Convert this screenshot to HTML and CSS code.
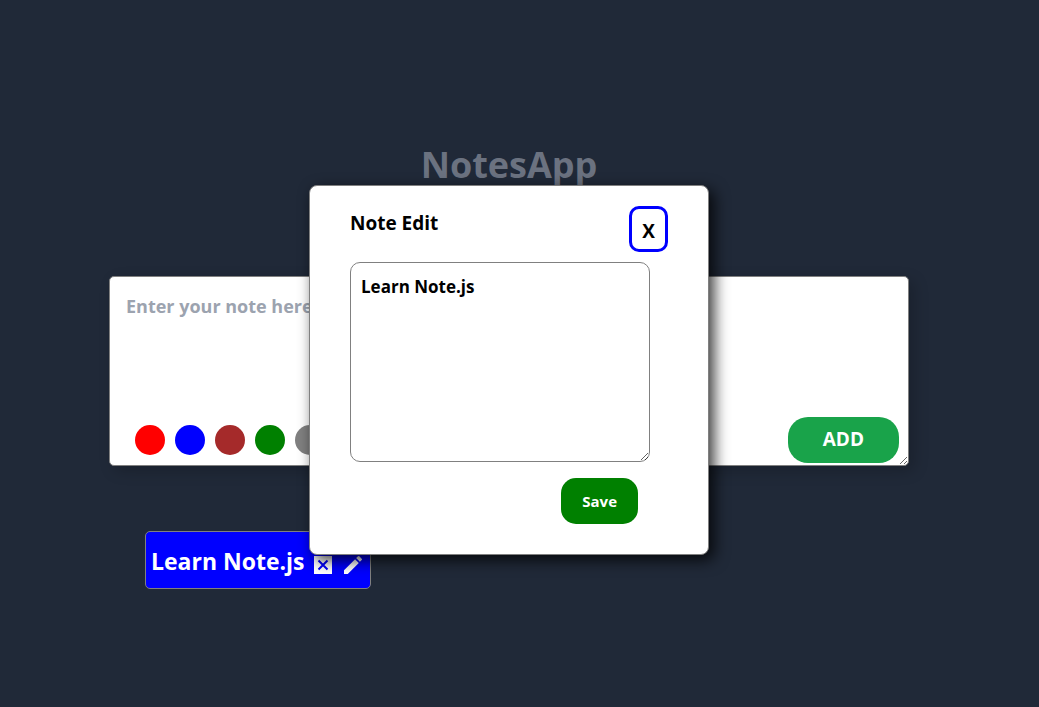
FILE: index.html
```html
<!DOCTYPE html>
<html lang="en">
<head>
  <meta charset="utf-8">
  <meta name="viewport" content="width=device-width, initial-scale=1">
  <title>NotesApp</title>
  <link rel="stylesheet" href="styles.css">
</head>
<body>
  <main class="page">
    <h1 class="title">NotesApp</h1>
    <form class="composer">
      <textarea class="composer-input" aria-label="New note" placeholder="Enter your note here..."></textarea>
      <div class="composer-bar">
        <div class="swatches">
          <button type="button" class="swatch red" aria-label="Red"></button>
          <button type="button" class="swatch blue" aria-label="Blue"></button>
          <button type="button" class="swatch brown" aria-label="Brown"></button>
          <button type="button" class="swatch green" aria-label="Green"></button>
          <button type="button" class="swatch gray" aria-label="Gray"></button>
        </div>
        <button type="button" class="add">ADD</button>
      </div>
    </form>
    <section class="notes">
      <article class="note">
        <span class="note-text">Learn Note.js</span>
        <button type="button" class="icon-button" aria-label="Delete note">
          <svg width="24" height="24" viewBox="0 0 24 24"><path fill="#fff" d="M3 3h18v18H3z"/><path d="M7.500 7.500l9 9M16.500 7.500l-9 9" stroke="#00f" stroke-width="2"/></svg>
        </button>
        <button type="button" class="icon-button" aria-label="Edit note">
          <svg width="24" height="24" viewBox="0 0 24 24"><path fill="#fff" d="M3 17.250V21h3.750L17.810 9.940l-3.750-3.750L3 17.250zM20.710 7.040a1 1 0 0 0 0-1.410l-2.340-2.340a1 1 0 0 0-1.410 0l-1.830 1.830 3.750 3.750 1.830-1.830z"/></svg>
        </button>
      </article>
    </section>
    <div class="modal" role="dialog" aria-labelledby="edit-title">
      <header class="modal-header">
        <h2 class="modal-title" id="edit-title">Note Edit</h2>
        <button type="button" class="close">X</button>
      </header>
      <textarea class="edit-input" aria-labelledby="edit-title">Learn Note.js</textarea>
      <button type="button" class="save">Save</button>
    </div>
  </main>
</body>
</html>
```
FILE: styles.css
```css
* { box-sizing: border-box; }

body {
  margin: 0;
  padding-right: 21px;
  min-height: 100vh;
  background: #202938;
  font-family: "Segoe UI", "Open Sans", "Noto Sans", sans-serif;
  font-weight: 700;
}

button, textarea { font: inherit; }
button { padding: 0; border: 0; cursor: pointer; }

.page {
  position: relative;
  max-width: 800px;
  margin: 0 auto;
  padding-top: 141px;
}

.title {
  margin: 0 0 87px;
  color: #6b7280;
  font-size: 36px;
  line-height: 48px;
  text-align: center;
}

.composer { position: relative; }

.composer-input {
  display: block;
  width: 100%;
  height: 190px;
  padding: 15px 16px;
  border: 1px solid gray;
  border-radius: 5px;
  background: #fff;
  font-size: 18px;
  line-height: 28px;
  box-shadow: 5px 5px 15px rgba(0, 0, 0, 0.2);
}

.composer-input::placeholder { color: #9ca3af; opacity: 1; }

.composer-bar {
  position: absolute;
  right: 10px;
  bottom: 3px;
  left: 26px;
  display: flex;
  align-items: center;
  justify-content: space-between;
}

.swatches { display: flex; gap: 10px; }
.swatch { width: 30px; height: 30px; border-radius: 50%; }
.red { background: red; }
.blue { background: blue; }
.brown { background: brown; }
.green { background: green; }
.gray { background: gray; }

.add {
  padding: 7px 35px 9px;
  border-radius: 20px;
  background: #19a34a;
  color: #fff;
  font-size: 19px;
  line-height: 30px;
}

.notes { padding: 65px 36px; }

.note {
  display: inline-flex;
  align-items: flex-end;
  gap: 6px;
  padding: 13px 5px 11px;
  border: 1px solid gray;
  border-radius: 5px;
  background: blue;
  color: #fff;
}

.note-text { font-size: 23px; line-height: 32px; }
.icon-button { height: 24px; background: transparent; }
.icon-button svg { display: block; }

.modal {
  position: absolute;
  top: 185px;
  left: 50%;
  width: 400px;
  padding: 20px 40px 30px;
  border: 1px solid gray;
  border-radius: 8px;
  background: #fff;
  color: #000;
  transform: translateX(-50%);
  box-shadow: 5px 5px 15px rgba(0, 0, 0, 0.8);
}

.modal-header {
  display: flex;
  align-items: flex-start;
  justify-content: space-between;
  margin-bottom: 10px;
}

.modal-title { margin: 3px 0 0; font-size: 19px; line-height: 28px; }

.close {
  padding: 10px 10px 6px;
  border: 3px solid blue;
  border-radius: 10px;
  background: #fff;
  color: #000;
  font-size: 19px;
  line-height: 24px;
}

.edit-input {
  display: block;
  width: 300px;
  height: 200px;
  padding: 10px;
  border: 1px solid gray;
  border-radius: 10px;
  background: #fff;
  color: #000;
  font-size: 17px;
  line-height: 28px;
}

.save {
  display: block;
  margin: 16px 30px 0 auto;
  padding: 11px 21px;
  border-radius: 15px;
  background: green;
  color: #fff;
  font-size: 15px;
  line-height: 24px;
}
```
